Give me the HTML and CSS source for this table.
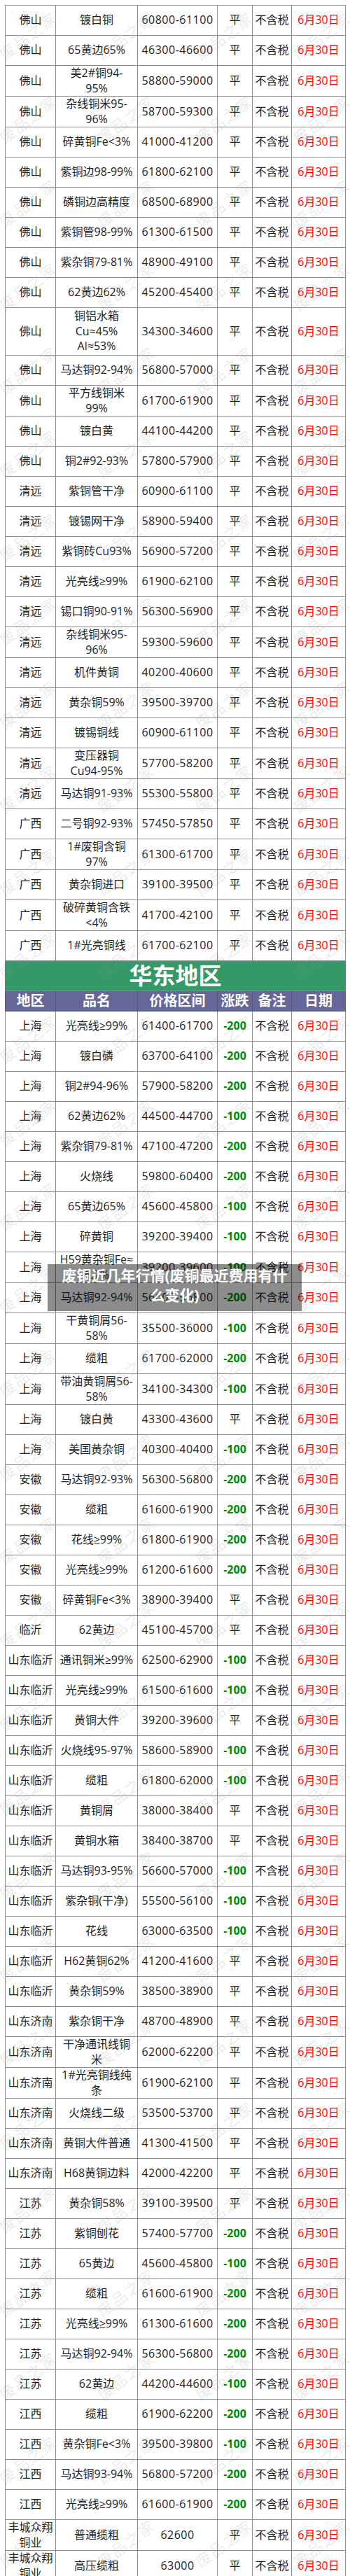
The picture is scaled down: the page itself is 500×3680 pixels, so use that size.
FILE: index.html
```html
<!DOCTYPE html>
<html lang="zh-CN">
<head>
<meta charset="utf-8">
<title>废铜价格</title>
<link rel="stylesheet" href="styles.css">
</head>
<body>
<div class="page">
<table class="price-table">
<colgroup>
<col class="c-region"><col class="c-name"><col class="c-price"><col class="c-chg"><col class="c-note"><col class="c-date">
</colgroup>
<tbody>
<tr><td>佛山</td><td>镀白铜</td><td class="price">60800-61100</td><td>平</td><td>不含税</td><td class="date">6月30日</td></tr>
<tr><td>佛山</td><td>65黄边65%</td><td class="price">46300-46600</td><td>平</td><td>不含税</td><td class="date">6月30日</td></tr>
<tr><td>佛山</td><td>美2#铜94-<br>95%</td><td class="price">58800-59000</td><td>平</td><td>不含税</td><td class="date">6月30日</td></tr>
<tr><td>佛山</td><td>杂线铜米95-<br>96%</td><td class="price">58700-59300</td><td>平</td><td>不含税</td><td class="date">6月30日</td></tr>
<tr><td>佛山</td><td>碎黄铜Fe&lt;3%</td><td class="price">41000-41200</td><td>平</td><td>不含税</td><td class="date">6月30日</td></tr>
<tr><td>佛山</td><td>紫铜边98-99%</td><td class="price">61800-62100</td><td>平</td><td>不含税</td><td class="date">6月30日</td></tr>
<tr><td>佛山</td><td>磷铜边高精度</td><td class="price">68500-68900</td><td>平</td><td>不含税</td><td class="date">6月30日</td></tr>
<tr><td>佛山</td><td>紫铜管98-99%</td><td class="price">61300-61500</td><td>平</td><td>不含税</td><td class="date">6月30日</td></tr>
<tr><td>佛山</td><td>紫杂铜79-81%</td><td class="price">48900-49100</td><td>平</td><td>不含税</td><td class="date">6月30日</td></tr>
<tr><td>佛山</td><td>62黄边62%</td><td class="price">45200-45400</td><td>平</td><td>不含税</td><td class="date">6月30日</td></tr>
<tr class="tall"><td>佛山</td><td>铜铝水箱<br>Cu≈45%<br>Al≈53%</td><td class="price">34300-34600</td><td>平</td><td>不含税</td><td class="date">6月30日</td></tr>
<tr><td>佛山</td><td>马达铜92-94%</td><td class="price">56800-57000</td><td>平</td><td>不含税</td><td class="date">6月30日</td></tr>
<tr><td>佛山</td><td>平方线铜米<br>99%</td><td class="price">61700-61900</td><td>平</td><td>不含税</td><td class="date">6月30日</td></tr>
<tr><td>佛山</td><td>镀白黄</td><td class="price">44100-44200</td><td>平</td><td>不含税</td><td class="date">6月30日</td></tr>
<tr><td>佛山</td><td>铜2#92-93%</td><td class="price">57800-57900</td><td>平</td><td>不含税</td><td class="date">6月30日</td></tr>
<tr><td>清远</td><td>紫铜管干净</td><td class="price">60900-61100</td><td>平</td><td>不含税</td><td class="date">6月30日</td></tr>
<tr><td>清远</td><td>镀锡网干净</td><td class="price">58900-59400</td><td>平</td><td>不含税</td><td class="date">6月30日</td></tr>
<tr><td>清远</td><td>紫铜砖Cu93%</td><td class="price">56900-57200</td><td>平</td><td>不含税</td><td class="date">6月30日</td></tr>
<tr><td>清远</td><td>光亮线≥99%</td><td class="price">61900-62100</td><td>平</td><td>不含税</td><td class="date">6月30日</td></tr>
<tr><td>清远</td><td>锡口铜90-91%</td><td class="price">56300-56900</td><td>平</td><td>不含税</td><td class="date">6月30日</td></tr>
<tr><td>清远</td><td>杂线铜米95-<br>96%</td><td class="price">59300-59600</td><td>平</td><td>不含税</td><td class="date">6月30日</td></tr>
<tr><td>清远</td><td>机件黄铜</td><td class="price">40200-40600</td><td>平</td><td>不含税</td><td class="date">6月30日</td></tr>
<tr><td>清远</td><td>黄杂铜59%</td><td class="price">39500-39700</td><td>平</td><td>不含税</td><td class="date">6月30日</td></tr>
<tr><td>清远</td><td>镀锡铜线</td><td class="price">60900-61100</td><td>平</td><td>不含税</td><td class="date">6月30日</td></tr>
<tr><td>清远</td><td>变压器铜<br>Cu94-95%</td><td class="price">57700-58200</td><td>平</td><td>不含税</td><td class="date">6月30日</td></tr>
<tr><td>清远</td><td>马达铜91-93%</td><td class="price">55300-55800</td><td>平</td><td>不含税</td><td class="date">6月30日</td></tr>
<tr><td>广西</td><td>二号铜92-93%</td><td class="price">57450-57850</td><td>平</td><td>不含税</td><td class="date">6月30日</td></tr>
<tr><td>广西</td><td>1#废铜含铜<br>97%</td><td class="price">61300-61700</td><td>平</td><td>不含税</td><td class="date">6月30日</td></tr>
<tr><td>广西</td><td>黄杂铜进口</td><td class="price">39100-39500</td><td>平</td><td>不含税</td><td class="date">6月30日</td></tr>
<tr><td>广西</td><td>破碎黄铜含铁<br>&lt;4%</td><td class="price">41700-42100</td><td>平</td><td>不含税</td><td class="date">6月30日</td></tr>
<tr><td>广西</td><td>1#光亮铜线</td><td class="price">61700-62100</td><td>平</td><td>不含税</td><td class="date">6月30日</td></tr>
<tr class="band"><td colspan="6">华东地区</td></tr>
<tr class="head"><td>地区</td><td>品名</td><td>价格区间</td><td>涨跌</td><td>备注</td><td>日期</td></tr>
<tr><td>上海</td><td>光亮线≥99%</td><td class="price">61400-61700</td><td class="down">-200</td><td>不含税</td><td class="date">6月30日</td></tr>
<tr><td>上海</td><td>镀白磷</td><td class="price">63700-64100</td><td class="down">-200</td><td>不含税</td><td class="date">6月30日</td></tr>
<tr><td>上海</td><td>铜2#94-96%</td><td class="price">57900-58200</td><td class="down">-200</td><td>不含税</td><td class="date">6月30日</td></tr>
<tr><td>上海</td><td>62黄边62%</td><td class="price">44500-44700</td><td class="down">-100</td><td>不含税</td><td class="date">6月30日</td></tr>
<tr><td>上海</td><td>紫杂铜79-81%</td><td class="price">47100-47200</td><td class="down">-200</td><td>不含税</td><td class="date">6月30日</td></tr>
<tr><td>上海</td><td>火烧线</td><td class="price">59800-60400</td><td class="down">-200</td><td>不含税</td><td class="date">6月30日</td></tr>
<tr><td>上海</td><td>65黄边65%</td><td class="price">45600-45800</td><td class="down">-100</td><td>不含税</td><td class="date">6月30日</td></tr>
<tr><td>上海</td><td>碎黄铜</td><td class="price">39200-39400</td><td class="down">-100</td><td>不含税</td><td class="date">6月30日</td></tr>
<tr><td>上海</td><td>H59黄杂铜Fe≈<br>6.7%</td><td class="price">39200-39600</td><td class="down">-100</td><td>不含税</td><td class="date">6月30日</td></tr>
<tr><td>上海</td><td>马达铜92-94%</td><td class="price">56600-56800</td><td class="down">-200</td><td>不含税</td><td class="date">6月30日</td></tr>
<tr><td>上海</td><td>干黄铜屑56-<br>58%</td><td class="price">35500-36000</td><td class="down">-100</td><td>不含税</td><td class="date">6月30日</td></tr>
<tr><td>上海</td><td>缆粗</td><td class="price">61700-62000</td><td class="down">-200</td><td>不含税</td><td class="date">6月30日</td></tr>
<tr><td>上海</td><td>带油黄铜屑56-<br>58%</td><td class="price">34100-34300</td><td class="down">-100</td><td>不含税</td><td class="date">6月30日</td></tr>
<tr><td>上海</td><td>镀白黄</td><td class="price">43300-43600</td><td>平</td><td>不含税</td><td class="date">6月30日</td></tr>
<tr><td>上海</td><td>美国黄杂铜</td><td class="price">40300-40400</td><td class="down">-100</td><td>不含税</td><td class="date">6月30日</td></tr>
<tr><td>安徽</td><td>马达铜92-93%</td><td class="price">56300-56800</td><td class="down">-200</td><td>不含税</td><td class="date">6月30日</td></tr>
<tr><td>安徽</td><td>缆粗</td><td class="price">61600-61900</td><td class="down">-200</td><td>不含税</td><td class="date">6月30日</td></tr>
<tr><td>安徽</td><td>花线≥99%</td><td class="price">61800-61900</td><td class="down">-200</td><td>不含税</td><td class="date">6月30日</td></tr>
<tr><td>安徽</td><td>光亮线≥99%</td><td class="price">61200-61600</td><td class="down">-200</td><td>不含税</td><td class="date">6月30日</td></tr>
<tr><td>安徽</td><td>碎黄铜Fe&lt;3%</td><td class="price">38900-39400</td><td>平</td><td>不含税</td><td class="date">6月30日</td></tr>
<tr><td>临沂</td><td>62黄边</td><td class="price">45100-45700</td><td>平</td><td>不含税</td><td class="date">6月30日</td></tr>
<tr><td>山东临沂</td><td>通讯铜米≥99%</td><td class="price">62500-62900</td><td class="down">-100</td><td>不含税</td><td class="date">6月30日</td></tr>
<tr><td>山东临沂</td><td>光亮线≥99%</td><td class="price">61500-61600</td><td class="down">-100</td><td>不含税</td><td class="date">6月30日</td></tr>
<tr><td>山东临沂</td><td>黄铜大件</td><td class="price">39200-39600</td><td>平</td><td>不含税</td><td class="date">6月30日</td></tr>
<tr><td>山东临沂</td><td>火烧线95-97%</td><td class="price">58600-58900</td><td class="down">-100</td><td>不含税</td><td class="date">6月30日</td></tr>
<tr><td>山东临沂</td><td>缆粗</td><td class="price">61800-62000</td><td class="down">-100</td><td>不含税</td><td class="date">6月30日</td></tr>
<tr><td>山东临沂</td><td>黄铜屑</td><td class="price">38000-38400</td><td>平</td><td>不含税</td><td class="date">6月30日</td></tr>
<tr><td>山东临沂</td><td>黄铜水箱</td><td class="price">38400-38700</td><td>平</td><td>不含税</td><td class="date">6月30日</td></tr>
<tr><td>山东临沂</td><td>马达铜93-95%</td><td class="price">56600-57000</td><td class="down">-100</td><td>不含税</td><td class="date">6月30日</td></tr>
<tr><td>山东临沂</td><td>紫杂铜(干净)</td><td class="price">55500-56100</td><td class="down">-100</td><td>不含税</td><td class="date">6月30日</td></tr>
<tr><td>山东临沂</td><td>花线</td><td class="price">63000-63500</td><td class="down">-100</td><td>不含税</td><td class="date">6月30日</td></tr>
<tr><td>山东临沂</td><td>H62黄铜62%</td><td class="price">41200-41600</td><td>平</td><td>不含税</td><td class="date">6月30日</td></tr>
<tr><td>山东临沂</td><td>黄杂铜59%</td><td class="price">38500-38900</td><td>平</td><td>不含税</td><td class="date">6月30日</td></tr>
<tr><td>山东济南</td><td>紫杂铜干净</td><td class="price">48700-48900</td><td>平</td><td>不含税</td><td class="date">6月30日</td></tr>
<tr><td>山东济南</td><td>干净通讯线铜<br>米</td><td class="price">62000-62200</td><td>平</td><td>不含税</td><td class="date">6月30日</td></tr>
<tr><td>山东济南</td><td>1#光亮铜线纯<br>条</td><td class="price">61900-62100</td><td>平</td><td>不含税</td><td class="date">6月30日</td></tr>
<tr><td>山东济南</td><td>火烧线二级</td><td class="price">53500-53700</td><td>平</td><td>不含税</td><td class="date">6月30日</td></tr>
<tr><td>山东济南</td><td>黄铜大件普通</td><td class="price">41300-41500</td><td>平</td><td>不含税</td><td class="date">6月30日</td></tr>
<tr><td>山东济南</td><td>H68黄铜边料</td><td class="price">42000-42200</td><td>平</td><td>不含税</td><td class="date">6月30日</td></tr>
<tr><td>江苏</td><td>黄杂铜58%</td><td class="price">39100-39500</td><td>平</td><td>不含税</td><td class="date">6月30日</td></tr>
<tr><td>江苏</td><td>紫铜刨花</td><td class="price">57400-57700</td><td class="down">-200</td><td>不含税</td><td class="date">6月30日</td></tr>
<tr><td>江苏</td><td>65黄边</td><td class="price">45600-45800</td><td class="down">-100</td><td>不含税</td><td class="date">6月30日</td></tr>
<tr><td>江苏</td><td>缆粗</td><td class="price">61600-61900</td><td class="down">-200</td><td>不含税</td><td class="date">6月30日</td></tr>
<tr><td>江苏</td><td>光亮线≥99%</td><td class="price">61300-61600</td><td class="down">-200</td><td>不含税</td><td class="date">6月30日</td></tr>
<tr><td>江苏</td><td>马达铜92-94%</td><td class="price">56300-56800</td><td class="down">-200</td><td>不含税</td><td class="date">6月30日</td></tr>
<tr><td>江苏</td><td>62黄边</td><td class="price">44200-44600</td><td class="down">-100</td><td>不含税</td><td class="date">6月30日</td></tr>
<tr><td>江西</td><td>缆粗</td><td class="price">61900-62200</td><td class="down">-200</td><td>不含税</td><td class="date">6月30日</td></tr>
<tr><td>江西</td><td>黄杂铜Fe&lt;3%</td><td class="price">39500-39800</td><td class="down">-100</td><td>不含税</td><td class="date">6月30日</td></tr>
<tr><td>江西</td><td>马达铜93-94%</td><td class="price">56800-57200</td><td class="down">-200</td><td>不含税</td><td class="date">6月30日</td></tr>
<tr><td>江西</td><td>光亮线≥99%</td><td class="price">61600-61900</td><td class="down">-200</td><td>不含税</td><td class="date">6月30日</td></tr>
<tr><td>丰城众翔<br>铜业</td><td>普通缆粗</td><td class="price">62600</td><td>平</td><td>不含税</td><td class="date">6月30日</td></tr>
<tr><td>丰城众翔<br>铜业</td><td>高压缆粗</td><td class="price">63000</td><td>平</td><td>不含税</td><td class="date">6月30日</td></tr>
</tbody>
</table>
<div class="caption">废铜近几年行情(废铜最近费用有什<br>么变化)</div>
<div class="watermarks" aria-hidden="true"></div>
</div>
<script src="script.js"></script>
</body>
</html>
```

FILE: styles.css
```css
* { box-sizing: border-box; }

body {
  margin: 0;
  background: #ffffff;
  font-family: "Open Sans", "Noto Sans CJK SC", sans-serif;
}

.page {
  position: relative;
  width: 500px;
  height: 3680px;
  padding: 7px 0 0 7px;
  overflow: hidden;
}

.price-table {
  border-collapse: collapse;
  table-layout: fixed;
  width: 486px;
  font-size: 16px;
  color: #222222;
}

.c-region { width: 72px; }
.c-name { width: 117px; }
.c-price { width: 114px; }
.c-chg { width: 50px; }
.c-note { width: 56px; }
.c-date { width: 77px; }

.price-table td {
  border: 1px solid #8c8c8c;
  padding: 0;
  height: 43px;
  line-height: 21.5px;
  text-align: center;
  vertical-align: middle;
  white-space: nowrap;
  overflow: visible;
}

.price-table .tall td { height: 68px; }

.price-table .price { letter-spacing: 0.5px; }

.price-table .date { color: #ff0000; }

.price-table .down {
  color: #008a00;
  font-weight: 700;
}

.price-table .band td {
  height: 42px;
  background: #339966;
  color: #ffffff;
  font-size: 33px;
  font-weight: 700;
  line-height: 42px;
  border-left-color: #339966;
  border-right-color: #339966;
}

.price-table .head td {
  height: 29px;
  background: #666699;
  color: #ffffff;
  font-size: 20px;
  font-weight: 700;
  line-height: 28px;
  border-color: #555577;
}

.caption {
  position: absolute;
  left: 68px;
  top: 1806px;
  width: 363px;
  height: 67px;
  padding: 2px 0 0;
  background: rgba(0, 0, 0, 0.45);
  color: #ffffff;
  font-size: 21px;
  font-weight: 700;
  line-height: 28px;
  text-align: center;
}

.watermarks {
  position: absolute;
  left: 0;
  top: 0;
  width: 500px;
  height: 3680px;
  pointer-events: none;
}

.wm {
  position: absolute;
  width: 110px;
  height: 26px;
  line-height: 26px;
  text-align: center;
  font-size: 22px;
  letter-spacing: 2px;
  color: rgba(150, 150, 150, 0.2);
  transform: translate(-50%, -50%) rotate(-37deg);
  white-space: nowrap;
}
```

FILE: script.js
```js
(function () {
  var layer = document.querySelector('.watermarks');
  if (!layer) return;
  for (var k = 0; k < 31; k++) {
    for (var i = 0; i < 4; i++) {
      var s = document.createElement('span');
      s.className = 'wm';
      s.textContent = '废品之家';
      s.style.left = (40 + 140 * i) + 'px';
      s.style.top = (51 + 119.4 * k) + 'px';
      layer.appendChild(s);
    }
  }
})();
```
